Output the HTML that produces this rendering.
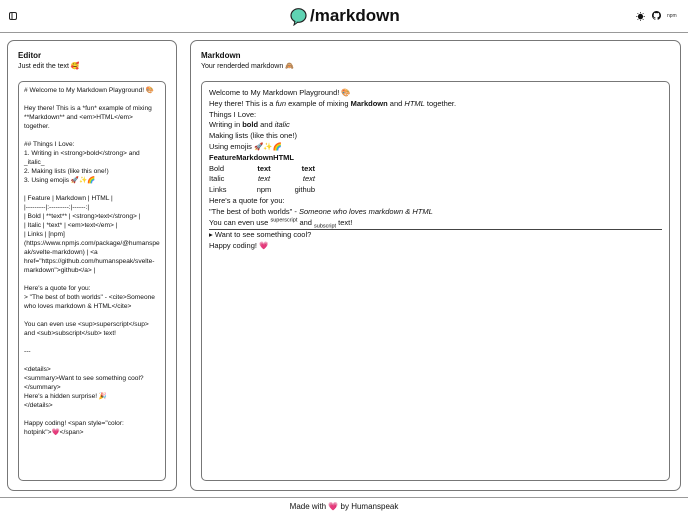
<!DOCTYPE html>
<html><head><meta charset="utf-8"><style>
*{box-sizing:border-box;margin:0;padding:0}
body{width:688px;height:512px;background:#fff;font-family:"Liberation Sans","Noto Sans CJK JP",sans-serif;color:#111;position:relative;overflow:hidden}
.hdr{position:absolute;left:0;top:0;width:688px;height:33px;border-bottom:1px solid #999}
.panel{position:absolute;top:40px;height:451px;border:1px solid #777;border-radius:7px}
.box{position:absolute;border:1px solid #777;border-radius:5px}
.ed{font-size:6.6px;line-height:9px;white-space:pre-wrap;padding:4px 5px;overflow-wrap:anywhere}
.pv{font-size:7.5px;line-height:10.8px;padding:6px 7px}
.pv sup,.pv sub{font-size:5.5px;line-height:0}
h3{font-size:8px;font-weight:bold;position:absolute;left:10px;top:10px}
.sub{font-size:7px;position:absolute;left:10px;top:21px}
</style></head><body>
<div class="hdr">
 <svg style="position:absolute;left:9px;top:12px" width="8" height="8" viewBox="0 0 8 8"><rect x="0.5" y="0.5" width="7" height="7" rx="1.5" fill="none" stroke="#222"/><line x1="3" y1="1" x2="3" y2="7" stroke="#222"/></svg>
 <svg style="position:absolute;left:290px;top:8px" width="17" height="18" viewBox="0 0 17 18"><ellipse cx="8.5" cy="7.5" rx="7.5" ry="6.8" fill="#5fd3b3" stroke="#222" stroke-width="1.2"/><path d="M5 13 L4 17 L8 14" fill="#5fd3b3" stroke="#222" stroke-width="1"/></svg>
 <div style="position:absolute;left:310px;top:6px;font-size:17px;font-weight:bold">/markdown</div>
 <div style="position:absolute;left:636px;top:10px;font-size:9px">☀</div>
 <svg style="position:absolute;left:652px;top:11px" width="9" height="9" viewBox="0 0 16 16"><path fill="#111" d="M8 0C3.6 0 0 3.6 0 8c0 3.5 2.3 6.5 5.5 7.6.4.1.5-.2.5-.4v-1.4c-2.2.5-2.7-1-2.7-1-.4-.9-.9-1.2-.9-1.2-.7-.5.1-.5.1-.5.8.1 1.2.8 1.2.8.7 1.3 1.9.9 2.3.7.1-.5.3-.9.5-1.1-1.8-.2-3.6-.9-3.6-4 0-.9.3-1.6.8-2.1-.1-.2-.4-1 .1-2.1 0 0 .7-.2 2.2.8.6-.2 1.3-.3 2-.3s1.4.1 2 .3c1.5-1 2.2-.8 2.2-.8.4 1.1.2 1.9.1 2.1.5.6.8 1.3.8 2.1 0 3.1-1.9 3.7-3.6 3.9.3.3.5.8.5 1.5v2.2c0 .2.1.5.6.4C13.7 14.5 16 11.5 16 8c0-4.4-3.6-8-8-8z"/></svg>
 <div style="position:absolute;left:667px;top:13px;font-size:5px;color:#333">npm</div>
</div>
<div class="panel" style="left:7px;width:170px">
 <h3>Editor</h3><div class="sub">Just edit the text 🥰</div>
 <div class="box ed" style="left:10px;top:40px;width:148px;height:400px"># Welcome to My Markdown Playground! 🎨

Hey there! This is a *fun* example of mixing **Markdown** and &lt;em&gt;HTML&lt;/em&gt; together.

## Things I Love:
1. Writing in &lt;strong&gt;bold&lt;/strong&gt; and _italic_
2. Making lists (like this one!)
3. Using emojis 🚀✨🌈

| Feature | Markdown | HTML |
|---------|:---------:|------:|
| Bold | **text** | &lt;strong&gt;text&lt;/strong&gt; |
| Italic | *text* | &lt;em&gt;text&lt;/em&gt; |
| Links | [npm] (https://www.npmjs.com/package/@humanspeak/svelte-markdown) | &lt;a href="https://github.com/humanspeak/svelte-markdown"&gt;github&lt;/a&gt; |

Here's a quote for you:
&gt; "The best of both worlds" - &lt;cite&gt;Someone who loves markdown &amp; HTML&lt;/cite&gt;

You can even use &lt;sup&gt;superscript&lt;/sup&gt; and &lt;sub&gt;subscript&lt;/sub&gt; text!

---

&lt;details&gt;
&lt;summary&gt;Want to see something cool? &lt;/summary&gt;
Here's a hidden surprise! 🎉
&lt;/details&gt;

Happy coding! &lt;span style="color:
hotpink"&gt;💗&lt;/span&gt;</div>
</div>
<div class="panel" style="left:190px;width:491px">
 <h3>Markdown</h3><div class="sub">Your renderded markdown 🙈</div>
 <div class="box pv" style="left:10px;top:40px;width:469px;height:400px">
  <div>Welcome to My Markdown Playground! 🎨</div>
  <div>Hey there! This is a <i>fun</i> example of mixing <b>Markdown</b> and <i>HTML</i> together.</div>
  <div>Things I Love:</div>
  <div>Writing in <b>bold</b> and <i>italic</i></div>
  <div>Making lists (like this one!)</div>
  <div>Using emojis 🚀✨🌈</div>
  <div><b>FeatureMarkdownHTML</b></div>
  <div style="display:flex"><span style="width:34px">Bold</span><b style="width:42px;text-align:center">text</b><b style="width:30px;text-align:right">text</b></div>
  <div style="display:flex"><span style="width:34px">Italic</span><i style="width:42px;text-align:center">text</i><i style="width:30px;text-align:right">text</i></div>
  <div style="display:flex"><span style="width:34px">Links</span><span style="width:42px;text-align:center">npm</span><span style="width:30px;text-align:right">github</span></div>
  <div>Here's a quote for you:</div>
  <div>"The best of both worlds" - <i>Someone who loves markdown &amp; HTML</i></div>
  <div style="border-bottom:1px solid #444;padding-bottom:1px">You can even use <sup>superscript</sup> and <sub>subscript</sub> text!</div>
  <div>▸ Want to see something cool?</div>
  <div>Happy coding! <span style="color:hotpink">💗</span></div>
 </div>
</div>
<div style="position:absolute;left:0;top:497px;width:688px;border-top:1px solid #999"></div>
<div style="position:absolute;left:0;top:502px;width:688px;text-align:center;font-size:8px">Made with <span style="color:hotpink">💗</span> by Humanspeak</div>
</body></html>
